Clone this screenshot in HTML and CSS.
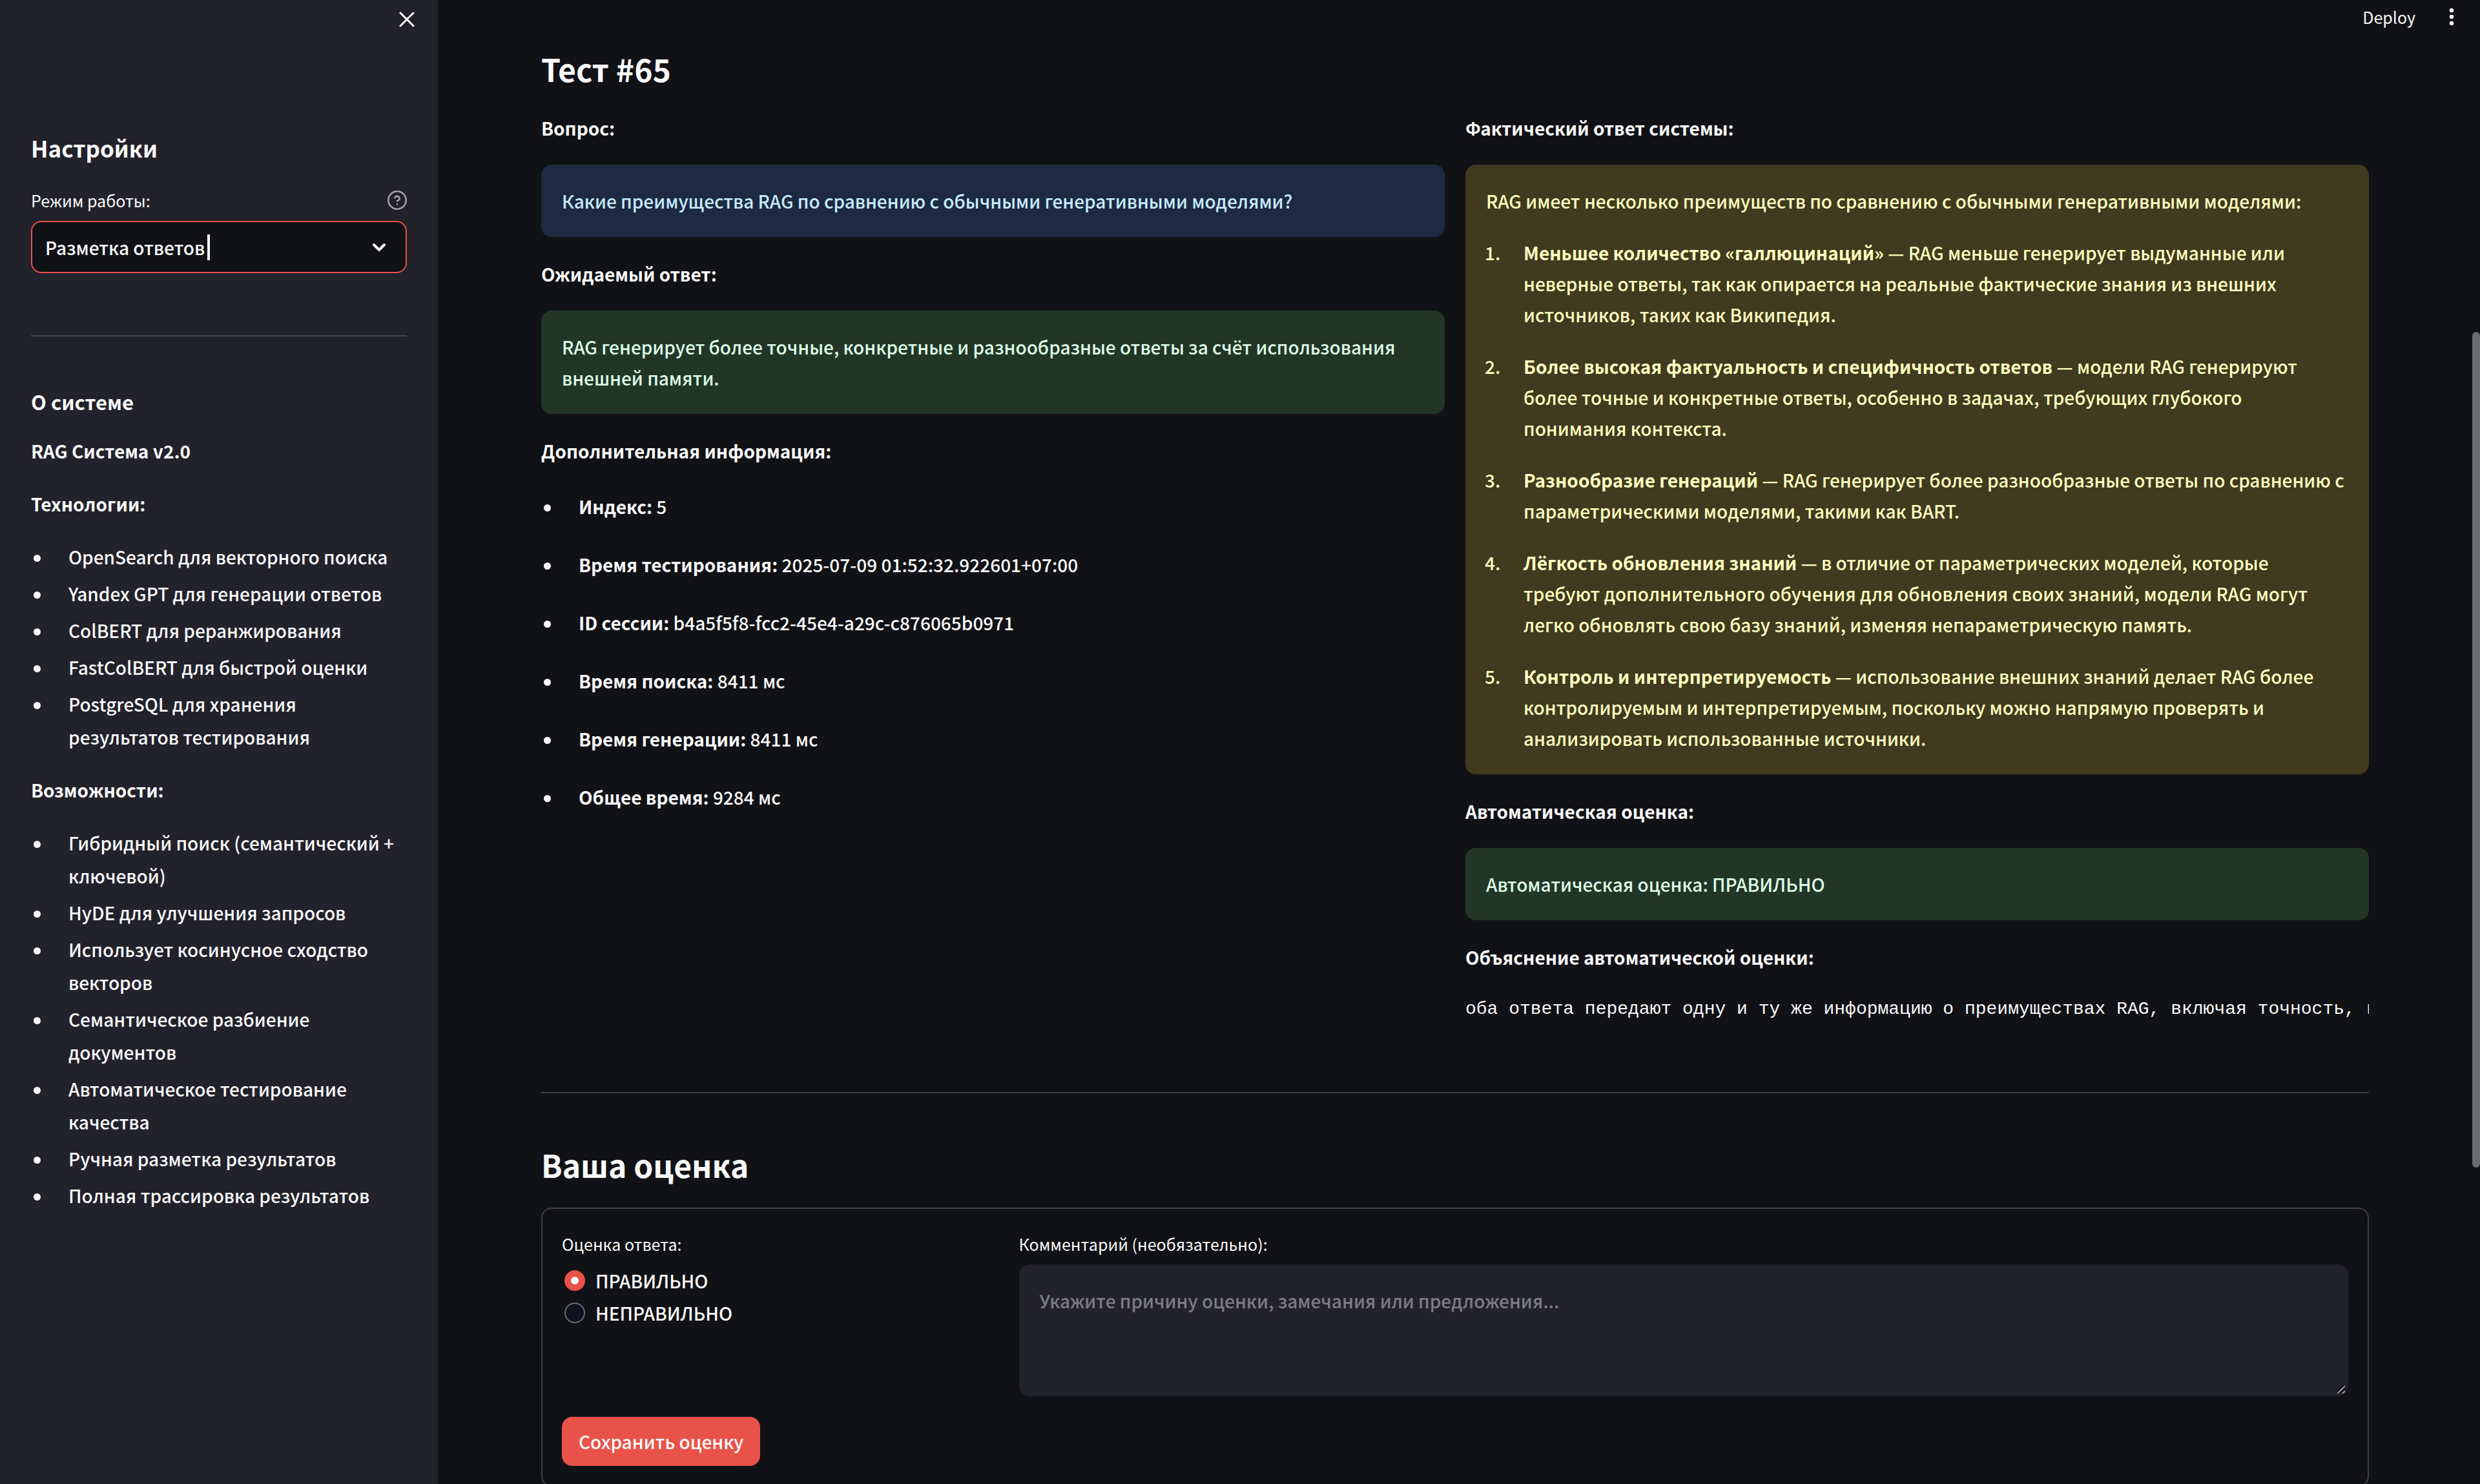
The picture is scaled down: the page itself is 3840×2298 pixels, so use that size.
FILE: index.html
```html
<!DOCTYPE html>
<html lang="ru">
<head>
<meta charset="utf-8">
<meta name="viewport" content="width=device-width, initial-scale=1">
<title>RAG Система — Разметка ответов</title>
<link rel="stylesheet" href="styles.css">
</head>
<body>
<div class="app">
  <aside class="sidebar">
    <div class="sidebar-top">
      <button class="icon-button" type="button" aria-label="Закрыть панель">
        <svg width="24" height="24" viewBox="0 0 24 24" fill="none" stroke="currentColor" stroke-width="3" stroke-linecap="round"><path d="M2 2l20 20M22 2L2 22"/></svg>
      </button>
    </div>
    <h2 class="side-title">Настройки</h2>
    <div class="field">
      <div class="field-head">
        <label class="field-label" for="mode">Режим работы:</label>
        <svg class="help" width="30" height="30" viewBox="0 0 24 24" fill="none" stroke="currentColor" stroke-width="2" stroke-linecap="round" stroke-linejoin="round"><circle cx="12" cy="12" r="11"/><path d="M9.1 9a3 3 0 0 1 5.8 1c0 2-3 3-3 3M12 17h.01"/></svg>
      </div>
      <div class="combo">
        <input class="combo-input" id="mode" type="text" role="combobox" aria-expanded="false" value="Разметка ответов" size="16">
        <span class="caret"></span>
        <svg class="chevron" width="22" height="14" viewBox="0 0 22 14" fill="none" stroke="currentColor" stroke-width="4" stroke-linecap="round" stroke-linejoin="round"><path d="M3 3l8 8 8-8"/></svg>
      </div>
    </div>
    <hr class="side-rule">
    <h3 class="side-subtitle">О системе</h3>
    <div class="about">
      <p><strong>RAG Система v2.0</strong></p>
      <p><strong>Технологии:</strong></p>
      <ul class="list side-list">
        <li>OpenSearch для векторного поиска</li>
        <li>Yandex GPT для генерации ответов</li>
        <li>ColBERT для реранжирования</li>
        <li>FastColBERT для быстрой оценки</li>
        <li>PostgreSQL для хранения результатов тестирования</li>
      </ul>
      <p><strong>Возможности:</strong></p>
      <ul class="list side-list">
        <li>Гибридный поиск (семантический + ключевой)</li>
        <li>HyDE для улучшения запросов</li>
        <li>Использует косинусное сходство векторов</li>
        <li>Семантическое разбиение документов</li>
        <li>Автоматическое тестирование качества</li>
        <li>Ручная разметка результатов</li>
        <li>Полная трассировка результатов</li>
      </ul>
    </div>
  </aside>

  <div class="page">
    <header class="toolbar">
      <button class="deploy" type="button">Deploy</button>
      <button class="icon-button" type="button" aria-label="Меню">
        <svg width="8" height="28" viewBox="0 0 8 28" fill="currentColor"><circle cx="4" cy="4" r="3.2"/><circle cx="4" cy="14" r="3.2"/><circle cx="4" cy="24" r="3.2"/></svg>
      </button>
    </header>
    <main class="content">
      <h2 class="title">Тест #65</h2>
      <div class="columns">
        <section class="column">
          <p class="label">Вопрос:</p>
          <div class="alert alert-info">Какие преимущества RAG по сравнению с обычными генеративными моделями?</div>
          <p class="label">Ожидаемый ответ:</p>
          <div class="alert alert-success">RAG генерирует более точные, конкретные и разнообразные ответы за счёт использования внешней памяти.</div>
          <p class="label">Дополнительная информация:</p>
          <ul class="list info-list">
            <li><strong>Индекс:</strong> 5</li>
            <li><strong>Время тестирования:</strong> 2025-07-09 01:52:32.922601+07:00</li>
            <li><strong>ID сессии:</strong> b4a5f5f8-fcc2-45e4-a29c-c876065b0971</li>
            <li><strong>Время поиска:</strong> 8411 мс</li>
            <li><strong>Время генерации:</strong> 8411 мс</li>
            <li><strong>Общее время:</strong> 9284 мс</li>
          </ul>
        </section>
        <section class="column">
          <p class="label">Фактический ответ системы:</p>
          <div class="alert alert-warning">
            <p>RAG имеет несколько преимуществ по сравнению с обычными генеративными моделями:</p>
            <ol class="list answer-list">
              <li><strong>Меньшее количество «галлюцинаций»</strong> — RAG меньше генерирует выдуманные или неверные ответы, так как опирается на реальные фактические знания из внешних источников, таких как Википедия.</li>
              <li><strong>Более высокая фактуальность и специфичность ответов</strong> — модели RAG генерируют более точные и конкретные ответы, особенно в задачах, требующих глубокого понимания контекста.</li>
              <li><strong>Разнообразие генераций</strong> — RAG генерирует более разнообразные ответы по сравнению с параметрическими моделями, такими как BART.</li>
              <li><strong>Лёгкость обновления знаний</strong> — в отличие от параметрических моделей, которые требуют дополнительного обучения для обновления своих знаний, модели RAG могут легко обновлять свою базу знаний, изменяя непараметрическую память.</li>
              <li><strong>Контроль и интерпретируемость</strong> — использование внешних знаний делает RAG более контролируемым и интерпретируемым, поскольку можно напрямую проверять и анализировать использованные источники.</li>
            </ol>
          </div>
          <p class="label">Автоматическая оценка:</p>
          <div class="alert alert-success">Автоматическая оценка: ПРАВИЛЬНО</div>
          <p class="label">Объяснение автоматической оценки:</p>
          <div class="mono">оба ответа передают одну и ту же информацию о преимуществах RAG, включая точность, конкретность</div>
        </section>
      </div>
      <hr class="rule">
      <h2 class="title">Ваша оценка</h2>
      <form class="card">
        <div class="card-columns">
          <fieldset class="rating">
            <legend class="field-label">Оценка ответа:</legend>
            <label class="choice"><input type="radio" name="rating" checked>ПРАВИЛЬНО</label>
            <label class="choice"><input type="radio" name="rating">НЕПРАВИЛЬНО</label>
          </fieldset>
          <div class="comment">
            <label class="field-label" for="comment">Комментарий (необязательно):</label>
            <div class="comment-box">
              <textarea id="comment" placeholder="Укажите причину оценки, замечания или предложения..."></textarea>
              <svg class="grip" width="16" height="16" viewBox="0 0 16 16" fill="none" stroke-width="1.6"><path d="M1 13L13 1M9 13l5-5" stroke="#0b0b0e"/><path d="M2 15L14 3M10 15l4-4" stroke="#b5b5b8"/></svg>
            </div>
          </div>
        </div>
        <button class="submit" type="button">Сохранить оценку</button>
      </form>
    </main>
    <div class="scroll-thumb"></div>
  </div>
</div>
</body>
</html>
```
FILE: styles.css
```css
:root {
  --bg: #111216;
  --panel: #22222b;
  --text: #fafafa;
  --line: #404145;
  --red: #e95249;
}

* {
  box-sizing: border-box;
}

body {
  margin: 0;
  background: var(--bg);
  color: var(--text);
  font-family: "Noto Sans CJK SC", "Noto Sans", sans-serif;
  font-size: 28px;
  font-weight: 500;
  line-height: 48px;
}

h2, h3, p, ul, ol, fieldset {
  margin: 0;
  padding: 0;
}

button, input, textarea {
  font: inherit;
  color: inherit;
}

strong {
  font-weight: 700;
}

.app {
  display: flex;
  height: 100vh;
  overflow: hidden;
}

/* Sidebar */

.sidebar {
  flex: 0 0 678px;
  padding: 0 48px;
  background: var(--panel);
}

.sidebar-top {
  display: flex;
  justify-content: flex-end;
  height: 206px;
  padding-top: 18px;
}

.icon-button {
  display: flex;
  align-items: center;
  padding: 0;
  border: 0;
  background: none;
}

.sidebar-top .icon-button {
  width: 24px;
  height: 24px;
  margin-right: -12px;
}

.side-title {
  margin-bottom: 34px;
  font-size: 35px;
  line-height: 46px;
}

.field-head {
  display: flex;
  align-items: center;
  justify-content: space-between;
  margin-bottom: 8px;
}

.field-label {
  display: block;
  font-size: 25px;
  font-weight: 400;
  line-height: 48px;
}

.help {
  color: #a3a3a8;
}

.combo {
  display: flex;
  align-items: center;
  height: 81px;
  padding: 0 30px 0 20px;
  border: 2px solid var(--red);
  border-radius: 16px;
  background: var(--bg);
}

.combo-input {
  width: 251px;
  padding: 0;
  border: 0;
  outline: 0;
  background: none;
}

.caret {
  width: 4px;
  height: 40px;
  background: var(--text);
}

.chevron {
  margin-left: auto;
}

.side-rule {
  height: 2px;
  margin: 96px 0 80px;
  border: 0;
  background: #45464c;
}

.side-subtitle {
  margin-bottom: 30px;
  font-size: 31px;
  line-height: 42px;
}

.about {
  display: flex;
  flex-direction: column;
  gap: 31px;
  line-height: 51px;
}

/* Lists */

.list {
  display: flex;
  flex-direction: column;
  list-style: none;
  padding-left: 58px;
}

.list li::before {
  float: left;
  margin-left: -60px;
}

.side-list {
  gap: 6px;
}

.side-list li::before,
.info-list li::before {
  content: "";
  width: 11px;
  height: 11px;
  margin-left: -54px;
  border-radius: 50%;
  background: currentColor;
}

.side-list li::before {
  margin-top: 22px;
}

.info-list {
  gap: 32px;
  line-height: 58px;
}

.info-list li::before {
  margin-top: 26px;
}

.answer-list {
  gap: 32px;
  margin-top: 32px;
  counter-reset: answer;
}

.answer-list li {
  counter-increment: answer;
}

.answer-list li::before {
  content: counter(answer) ".";
}

/* Main area */

.page {
  position: relative;
  flex: 1;
  min-width: 0;
}

.toolbar {
  display: flex;
  align-items: center;
  justify-content: flex-end;
  gap: 52px;
  height: 52px;
  padding-right: 40px;
}

.deploy {
  padding: 0;
  border: 0;
  background: none;
  font-size: 25px;
  font-weight: 400;
}

.content {
  padding: 22px 172px 0 160px;
}

.title {
  font-size: 48px;
  line-height: 64px;
  margin-bottom: 35px;
}

.columns {
  display: grid;
  grid-template-columns: 1fr 1fr;
  gap: 32px;
}

.column {
  display: flex;
  flex-direction: column;
  gap: 32px;
  min-width: 0;
}

.label {
  font-weight: 700;
  line-height: 50px;
}

.alert {
  padding: 32px;
  border-radius: 16px;
}

.alert-info {
  background: #1d2a41;
  color: #c7ebff;
}

.alert-success {
  background: #223628;
  color: #dffde6;
}

.alert-warning {
  background: #403a1e;
  color: #ffffc2;
}

.mono {
  overflow: hidden;
  white-space: nowrap;
  font-family: "Liberation Mono", monospace;
  font-size: 28px;
}

.rule {
  height: 2px;
  margin: 104px 0 78px;
  border: 0;
  background: #3b3c40;
}

/* Rating form */

.card {
  padding: 30px;
  border: 2px solid var(--line);
  border-radius: 16px;
}

.card-columns {
  display: flex;
  gap: 32px;
  margin-bottom: 32px;
}

.rating {
  flex: 1 1 calc(25% - 32px);
  min-width: 0;
  border: 0;
}

.rating legend {
  margin-bottom: 8px;
  padding: 0;
}

.comment {
  flex: 1 1 calc(75% - 32px);
}

.choice {
  display: flex;
  align-items: center;
  gap: 16px;
  height: 50px;
  padding-left: 4px;
}

.choice input {
  appearance: none;
  width: 32px;
  height: 32px;
  margin: 0;
  border: 2px solid #6b6c70;
  border-radius: 50%;
  background: #10131b;
}

.choice input:checked {
  border: 10px solid var(--red);
  background: var(--text);
}

.comment-box {
  position: relative;
  margin-top: 8px;
}

textarea {
  display: block;
  width: 100%;
  height: 204px;
  padding: 32px;
  border: 0;
  border-radius: 16px;
  background: var(--panel);
  resize: none;
}

.grip {
  position: absolute;
  right: 3px;
  bottom: 3px;
}

textarea::placeholder {
  color: #7d7d83;
}

.submit {
  height: 76px;
  padding: 0 26px;
  border: 0;
  border-radius: 16px;
  background: var(--red);
}

/* Thumb of the page scroll position, over the right edge */
.scroll-thumb {
  position: absolute;
  top: 514px;
  right: 0;
  width: 12px;
  height: 1294px;
  border-radius: 6px;
  background: #6b6c6e;
}
```
